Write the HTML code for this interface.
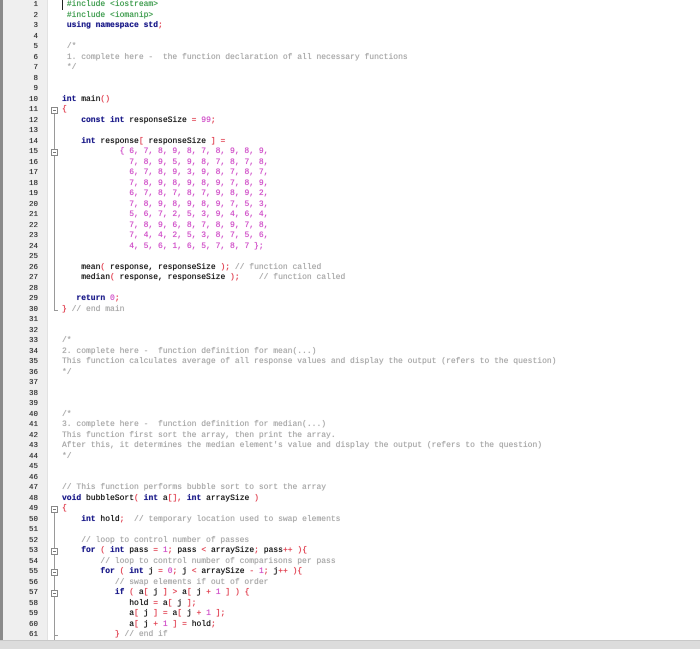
<!DOCTYPE html>
<html><head><meta charset="utf-8"><style>
html,body{margin:0;padding:0;background:#fff;width:700px;height:649px;overflow:hidden;position:relative}
#lb{position:absolute;left:0;top:0;width:3px;height:649px;background:#8a8a8a}
#gut{position:absolute;left:3px;top:0;width:44px;height:649px;background:#efefef;border-right:1px solid #e2e2e2}
#nums{position:absolute;left:3px;top:0;width:35px;text-align:right;font:7.5px/10.5px "Liberation Mono",monospace;color:#333;white-space:pre;text-shadow:0 0 0.4px #333}
#code{position:absolute;left:62px;top:0;font:8px/10.5px "Liberation Mono",monospace;color:#111;white-space:pre;margin:0;text-shadow:0 0 0.5px currentColor}
.k{color:#1c1c8a;font-weight:bold}
.g{color:#3a9a4a}
.c{color:#a8a8a8}
.n{color:#d050c8}
.o{color:#e04050}
.fb{position:absolute;left:51px;width:7px;height:7px;border:1px solid #888;background:#fff;box-sizing:border-box}
.fb:after{content:"";position:absolute;left:1px;right:1px;top:2px;height:1px;background:#777}
.fl{position:absolute;left:54px;width:1px;background:#999}
.ft{position:absolute;left:54px;width:4px;height:1px;background:#999}
#bot{position:absolute;left:0;top:640px;width:700px;height:9px;background:#dcdcdc;border-top:1px solid #c8c8c8}
#cur{position:absolute;left:62px;top:0;width:1px;height:10px;background:#222}
</style></head><body>
<div id="lb"></div><div id="gut"></div>
<div id="nums">1
2
3
4
5
6
7
8
9
10
11
12
13
14
15
16
17
18
19
20
21
22
23
24
25
26
27
28
29
30
31
32
33
34
35
36
37
38
39
40
41
42
43
44
45
46
47
48
49
50
51
52
53
54
55
56
57
58
59
60
61
62</div>
<div id="cur"></div>
<pre id="code"> <span class="g">#include &lt;iostream&gt;</span>
 <span class="g">#include &lt;iomanip&gt;</span>
 <span class="k">using namespace std</span><span class="o">;</span>

 <span class="c">/*</span>
 <span class="c">1. complete here -  the function declaration of all necessary functions</span>
 <span class="c">*/</span>


<span class="k">int</span> main<span class="o">()</span>
<span class="o">{</span>
    <span class="k">const int</span> responseSize <span class="o">=</span> <span class="n">99</span><span class="o">;</span>

    <span class="k">int</span> response<span class="o">[</span> responseSize <span class="o">]</span> <span class="o">=</span>
            <span class="n">{ 6, 7, 8, 9, 8, 7, 8, 9, 8, 9,</span>
              <span class="n">7, 8, 9, 5, 9, 8, 7, 8, 7, 8,</span>
              <span class="n">6, 7, 8, 9, 3, 9, 8, 7, 8, 7,</span>
              <span class="n">7, 8, 9, 8, 9, 8, 9, 7, 8, 9,</span>
              <span class="n">6, 7, 8, 7, 8, 7, 9, 8, 9, 2,</span>
              <span class="n">7, 8, 9, 8, 9, 8, 9, 7, 5, 3,</span>
              <span class="n">5, 6, 7, 2, 5, 3, 9, 4, 6, 4,</span>
              <span class="n">7, 8, 9, 6, 8, 7, 8, 9, 7, 8,</span>
              <span class="n">7, 4, 4, 2, 5, 3, 8, 7, 5, 6,</span>
              <span class="n">4, 5, 6, 1, 6, 5, 7, 8, 7 };</span>

    mean<span class="o">(</span> response, responseSize <span class="o">);</span> <span class="c">// function called</span>
    median<span class="o">(</span> response, responseSize <span class="o">);</span>    <span class="c">// function called</span>

   <span class="k">return</span> <span class="n">0</span><span class="o">;</span>
<span class="o">}</span> <span class="c">// end main</span>


<span class="c">/*</span>
<span class="c">2. complete here -  function definition for mean(...)</span>
<span class="c">This function calculates average of all response values and display the output (refers to the question)</span>
<span class="c">*/</span>



<span class="c">/*</span>
<span class="c">3. complete here -  function definition for median(...)</span>
<span class="c">This function first sort the array, then print the array.</span>
<span class="c">After this, it determines the median element's value and display the output (refers to the question)</span>
<span class="c">*/</span>


<span class="c">// This function performs bubble sort to sort the array</span>
<span class="k">void</span> bubbleSort<span class="o">(</span> <span class="k">int</span> a<span class="o">[],</span> <span class="k">int</span> arraySize <span class="o">)</span>
<span class="o">{</span>
    <span class="k">int</span> hold<span class="o">;</span>  <span class="c">// temporary location used to swap elements</span>

    <span class="c">// loop to control number of passes</span>
    <span class="k">for</span> <span class="o">(</span> <span class="k">int</span> pass <span class="o">=</span> <span class="n">1</span><span class="o">;</span> pass <span class="o">&lt;</span> arraySize<span class="o">;</span> pass<span class="o">++ ){</span>
        <span class="c">// loop to control number of comparisons per pass</span>
        <span class="k">for</span> <span class="o">(</span> <span class="k">int</span> j <span class="o">=</span> <span class="n">0</span><span class="o">;</span> j <span class="o">&lt;</span> arraySize <span class="o">-</span> <span class="n">1</span><span class="o">;</span> j<span class="o">++ ){</span>
           <span class="c">// swap elements if out of order</span>
           <span class="k">if</span> <span class="o">(</span> a<span class="o">[</span> j <span class="o">]</span> <span class="o">&gt;</span> a<span class="o">[</span> j <span class="o">+</span> <span class="n">1</span> <span class="o">] ) {</span>
              hold <span class="o">=</span> a<span class="o">[</span> j <span class="o">];</span>
              a<span class="o">[</span> j <span class="o">]</span> <span class="o">=</span> a<span class="o">[</span> j <span class="o">+</span> <span class="n">1</span> <span class="o">];</span>
              a<span class="o">[</span> j <span class="o">+</span> <span class="n">1</span> <span class="o">]</span> <span class="o">=</span> hold<span class="o">;</span>
           <span class="o">}</span> <span class="c">// end if</span>
        <span class="o">}</span></pre>
<div class="fl" style="top:111px;height:199px"></div>
<div class="ft" style="top:310px"></div>
<div class="fb" style="top:107px"></div>
<div class="fb" style="top:149px"></div>
<div class="fl" style="top:510px;height:135px"></div>
<div class="fb" style="top:506px"></div>
<div class="fb" style="top:548px"></div>
<div class="fb" style="top:569px"></div>
<div class="fb" style="top:590px"></div>
<div class="ft" style="top:635px"></div>
<div id="bot"></div>
</body></html>
